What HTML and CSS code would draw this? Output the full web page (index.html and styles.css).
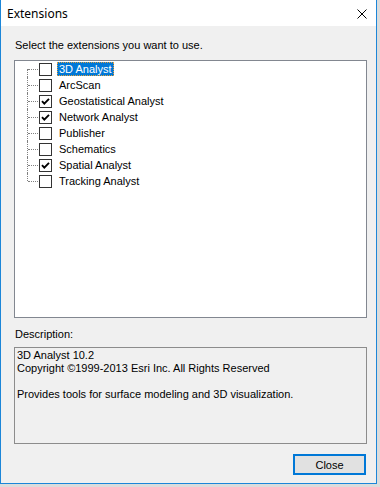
FILE: index.html
```
<html>
    <head>
        <title>Extensions</title>
    <link rel="stylesheet" href="styles.css">
</head>
<body>

    <div class="window">
        <div class="titlebar">
            <span class="title">Extensions</span>
            <svg class="close-x" viewBox="0 0 10 10" width="10" height="10">
                <path d="M0.5,0.5 L9.5,9.5 M9.5,0.5 L0.5,9.5" stroke="#000" stroke-width="1" fill="none"/>
            </svg>
        </div>

        <div class="content">
            <p class="prompt">Select the extensions you want to use.</p>

            <div class="listbox">
                <ul class="tree">
                    <li><span class="box"></span><span class="name selected">3D Analyst</span></li>
                    <li><span class="box"></span><span class="name">ArcScan</span></li>
                    <li><span class="box"><svg class="tick" viewBox="0 0 11 11"><path d="M2 5.2 L4.3 7.6 L9 2.8"/></svg></span><span class="name">Geostatistical Analyst</span></li>
                    <li><span class="box"><svg class="tick" viewBox="0 0 11 11"><path d="M2 5.2 L4.3 7.6 L9 2.8"/></svg></span><span class="name">Network Analyst</span></li>
                    <li><span class="box"></span><span class="name">Publisher</span></li>
                    <li><span class="box"></span><span class="name">Schematics</span></li>
                    <li><span class="box"><svg class="tick" viewBox="0 0 11 11"><path d="M2 5.2 L4.3 7.6 L9 2.8"/></svg></span><span class="name">Spatial Analyst</span></li>
                    <li><span class="box"></span><span class="name">Tracking Analyst</span></li>
                </ul>
            </div>

            <p class="label">Description:</p>
            <div class="desc">
                <div>3D Analyst 10.2</div>
                <div>Copyright &copy;1999-2013 Esri Inc. All Rights Reserved</div>
                <div>&nbsp;</div>
                <div>Provides tools for surface modeling and 3D visualization.</div>
            </div>

            <div class="actions">
                <button class="btn">Close</button>
            </div>
        </div>
    </div>

    </body>
</html>
```

FILE: styles.css
```
* {
    box-sizing: border-box;
    margin: 0;
    padding: 0;
}
body {
    background-color: #dcdcdc;
    font: 11px/13px "Liberation Sans", Arial, sans-serif;
    color: #000;
}
.window {
    width: 377px;
    height: 484px;
    background-color: #f0f0f0;
    border: 1px solid #1c86d8;
    border-top: 0;
    display: flex;
    flex-direction: column;
}

/* Title bar */
.titlebar {
    height: 26px;
    background-color: #fff;
    display: flex;
    align-items: center;
    justify-content: space-between;
    padding: 0 9px 0 6px;
}
.title {
    font: 12px/16px "Noto Sans", "Liberation Sans", sans-serif;
    margin-top: 1px;
}
.close-x {
    display: block;
    margin-top: 1px;
}

/* Body */
.content {
    flex: 1;
    display: flex;
    flex-direction: column;
    padding: 0 9px 0 13px;
}
.prompt {
    margin-top: 13px;
    margin-left: 1px;
}
.listbox {
    margin-top: 8px;
    width: 353px;
    height: 258px;
    background-color: #fff;
    border: 1px solid #828790;
}
.tree {
    list-style: none;
}
.tree li {
    position: relative;
    height: 16px;
    display: flex;
    align-items: center;
    padding-left: 24px;
}
.tree li::before {
    content: "";
    position: absolute;
    left: 12px;
    top: 0;
    bottom: 0;
    border-left: 1px dotted #808080;
}
.tree li:first-child::before {
    top: 8px;
}
.tree li:last-child::before {
    bottom: 8px;
}
.tree li::after {
    content: "";
    position: absolute;
    left: 13px;
    top: 8px;
    width: 10px;
    border-top: 1px dotted #808080;
}
.box {
    width: 13px;
    height: 13px;
    border: 1px solid #333;
    background-color: #fff;
    flex: none;
}
.tick {
    display: block;
    width: 11px;
    height: 11px;
    fill: none;
    stroke: #000;
    stroke-width: 1.9;
}
.name {
    margin-left: 5px;
    padding: 0 1px;
    height: 14px;
    line-height: 12px;
    border: 1px solid transparent;
}
.name.selected {
    background-color: #0078d7;
    color: #fff;
    border: 1px dotted #e0a040;
}

.label {
    margin-top: 10px;
    margin-left: 1px;
}
.desc {
    margin-top: 6px;
    width: 353px;
    height: 97px;
    border: 1px solid #8c8c8c;
    padding: 1px 2px;
}

.actions {
    display: flex;
    justify-content: flex-end;
    margin-top: 10px;
    padding-right: 1px;
}
.btn {
    width: 73px;
    height: 21px;
    background-color: #e1e1e1;
    border: 2px solid #0078d7;
    font: 11px "Liberation Sans", Arial, sans-serif;
    color: #000;
}
```
